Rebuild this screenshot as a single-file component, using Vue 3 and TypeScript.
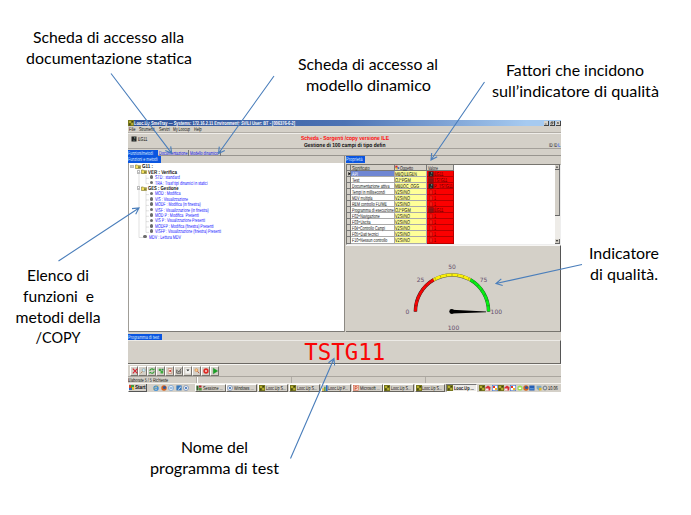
<script setup lang="ts">
import { h } from 'vue'

interface Label { t: string; x: number; y: number; w: number }
interface Node { t: string; w: number; level: number; kind: 'folder' | 'leaf' }
interface Row { name: string; w: number; obj: string; val: string; icon: string }

// Single line of interface text set to a fixed width.
const Fit = (props: { t: string; w: number }) =>
  h('svg', { class: 'fit', width: props.w, height: 6 }, [
    h('text', { x: 0, y: 4.8, textLength: props.w, lengthAdjust: 'spacingAndGlyphs' }, props.t),
  ])
Fit.props = ['t', 'w']

const labels: Label[] = [
  { t: 'Scheda di accesso alla', x: 33, y: 43, w: 151 },
  { t: 'documentazione statica', x: 26, y: 64, w: 166 },
  { t: 'Scheda di accesso al', x: 298, y: 70, w: 140 },
  { t: 'modello dinamico', x: 306, y: 91, w: 125 },
  { t: 'Fattori che incidono', x: 506, y: 76, w: 138 },
  { t: 'sull’indicatore di qualità', x: 492, y: 97, w: 167 },
  { t: 'Elenco di', x: 27, y: 281, w: 62 },
  { t: 'funzioni\u00a0 e', x: 23, y: 302, w: 71 },
  { t: 'metodi della', x: 15.5, y: 323, w: 85 },
  { t: '/COPY', x: 35.5, y: 343, w: 45 },
  { t: 'Indicatore', x: 589, y: 259, w: 70 },
  { t: 'di qualità.', x: 590, y: 280, w: 68 },
  { t: 'Nome del', x: 181, y: 453, w: 67 },
  { t: 'programma di test', x: 150, y: 474, w: 129 },
]

const arrows = [
  [111, 73.5, 171.7, 153.3],
  [274, 76, 218.5, 153.5],
  [484.5, 82, 431, 160],
  [58.5, 261, 139, 208],
  [582, 264.5, 496, 283.5],
  [290.5, 458.5, 334, 358.5],
]

function arrowPath([x1, y1, x2, y2]: number[]): string {
  const a = Math.atan2(y2 - y1, x2 - x1)
  const p = (d: number) => `${(x2 - 7 * Math.cos(a + d)).toFixed(1)} ${(y2 - 7 * Math.sin(a + d)).toFixed(1)}`
  return `M${x1} ${y1}L${x2} ${y2}M${p(0.5)}L${x2} ${y2}L${p(-0.5)}`
}

const menus = [
  { t: 'File', w: 6.5 },
  { t: 'Strumenti', w: 15.5 },
  { t: 'Servizi', w: 10.7 },
  { t: 'My Loocup', w: 17 },
  { t: 'Help', w: 7.7 },
]

const tree: Node[] = [
  { t: 'G11 :', w: 11, level: 0, kind: 'folder' },
  { t: 'VER : Verifica', w: 29, level: 1, kind: 'folder' },
  { t: 'STD : standard', w: 24.7, level: 2, kind: 'leaf' },
  { t: 'TRA : Trasf tipi dinamici in statici', w: 52.5, level: 2, kind: 'leaf' },
  { t: 'GES : Gestione', w: 30.5, level: 1, kind: 'folder' },
  { t: 'MOD : Modifica', w: 25.5, level: 2, kind: 'leaf' },
  { t: 'VIS : Visualizzazione', w: 33, level: 2, kind: 'leaf' },
  { t: 'MODF : Modifica (in finestra)', w: 45.7, level: 2, kind: 'leaf' },
  { t: 'VISF : Visualizzazione (in finestra)', w: 53.7, level: 2, kind: 'leaf' },
  { t: 'MOD P : Modifica  Presenti', w: 43.7, level: 2, kind: 'leaf' },
  { t: 'VIS P : Visualizzazione Presenti', w: 50, level: 2, kind: 'leaf' },
  { t: 'MODFP : Modifica (finestra) Presenti', w: 58.5, level: 2, kind: 'leaf' },
  { t: 'VISFP : Visualizzazione (finestra) Presenti', w: 66, level: 2, kind: 'leaf' },
  { t: 'MDV : Lettura MDV', w: 32, level: 1, kind: 'leaf' },
]

const objW: Record<string, number> = { MBQILEGEN: 22, 'OJ*PGM': 15.7, MBDOC_OGG: 24, 'V2SI/NO': 15 }
const valW: Record<string, number> = { ËG11: 9.3, TSTG11: 13.3, P_TSTG11: 18.7, '1': 1.8 }

const rows: Row[] = [
  { name: 'API', w: 6, obj: 'MBQILEGEN', val: 'ËG11', icon: 'dark' },
  { name: 'Test', w: 7.5, obj: 'OJ*PGM', val: 'TSTG11', icon: 'brown' },
  { name: 'Documentazione attiva', w: 37.5, obj: 'MBDOC_OGG', val: 'P_TSTG11', icon: 'dark' },
  { name: 'Tempi in millisecondi', w: 33, obj: 'V2SI/NO', val: '1', icon: 'page' },
  { name: 'MDV multipla', w: 20.5, obj: 'V2SI/NO', val: '1', icon: 'page' },
  { name: 'REM controllo FU/ME', w: 35, obj: 'V2SI/NO', val: '1', icon: 'page' },
  { name: 'Programma di esecuzione', w: 41.7, obj: 'OJ*PGM', val: 'ËG11', icon: 'brown' },
  { name: 'F02=Navigazione', w: 27.7, obj: 'V2SI/NO', val: '1', icon: 'page' },
  { name: 'F03=Uscita', w: 18.5, obj: 'V2SI/NO', val: '1', icon: 'page' },
  { name: 'F04=Controllo Campi', w: 33, obj: 'V2SI/NO', val: '1', icon: 'page' },
  { name: 'F05=Dati tecnici', w: 26.5, obj: 'V2SI/NO', val: '1', icon: 'page' },
  { name: 'F10=Nessun controllo', w: 35.3, obj: 'V2SI/NO', val: '1', icon: 'page' },
]

const tools = ['x', 'zoom', 'sync', 'exit', 'note', 'check', 'drop', 'find', 'stop', 'play']
const quick = ['ie', 'fox', 'mail', 'desk', 'chrome']
const tasks = [
  { t: 'Sessione ...', i: 'sess' },
  { t: 'Windows ...', i: 'chrome' },
  { t: 'Looc.Up S...', i: 'looc' },
  { t: 'Looc.Up S...', i: 'looc' },
  { t: 'Looc.Up P...', i: 'chart' },
  { t: 'Microsoft ...', i: 'ppt' },
  { t: 'Looc.Up S...', i: 'looc' },
  { t: 'Looc.Up S...', i: 'looc' },
  { t: 'Looc.Up ...', i: 'looc' },
]
const tray = ['looc', 'red', 'multi', 'looc', 'red', 'multi', 'green', 'fox', 'blue', 'shield', 'gear']

const ticks = Array.from({ length: 21 }, (_, i) => {
  const a = Math.PI * (1 - i / 20)
  const pt = (r: number) => `${(107 + r * Math.cos(a)).toFixed(2)} ${(65.5 - r * Math.sin(a)).toFixed(2)}`
  return `M${pt(35.6)}L${pt(37.6)}`
}).join('')
</script>

<template>
  <main class="page">
    <svg class="defs" width="0" height="0">
      <symbol id="looc" viewBox="0 0 6 6"><rect width="6" height="6" fill="#77771f" /><path d="M1 1h2v2H1zM3.2 3h2v2h-2z" fill="#b5ae30" /><path d="M1.2 3.6h1.2v1.8H1.2zM3.7 1h1.5v1.2H3.7z" fill="#40400f" /></symbol>
      <symbol id="ie" viewBox="0 0 6 6"><circle cx="3" cy="3.2" r="2.1" fill="none" stroke="#2b87d9" stroke-width="1.1" /><path d="M1 3.2h4" stroke="#2b87d9" /><path d="M.5 5C1 2 4 .3 5.8.9" fill="none" stroke="#dfb63b" stroke-width=".6" /></symbol>
      <symbol id="fox" viewBox="0 0 6 6"><circle cx="3" cy="3" r="2.7" fill="#d8621c" /><circle cx="3.5" cy="2.5" r="1.6" fill="#31569c" /></symbol>
      <symbol id="mail" viewBox="0 0 6 6"><circle cx="3" cy="3" r="2.6" fill="#e3effa" stroke="#5d91ca" stroke-width=".6" /><path d="M1.6 3h3" stroke="#3676be" stroke-width=".8" /></symbol>
      <symbol id="desk" viewBox="0 0 6 6"><rect x=".4" y=".4" width="5.2" height="5" fill="#3678bd" /><path d="M2 4.5l2.5-3 .5.6-2.4 2.7z" fill="#fff" /></symbol>
      <symbol id="chrome" viewBox="0 0 6 6"><circle cx="3" cy="3" r="2.5" fill="#f0f2f5" stroke="#6984ad" stroke-width=".7" /><circle cx="3" cy="3" r="1.1" fill="#356eb9" /></symbol>
      <symbol id="sess" viewBox="0 0 6 6"><path d="M.5.8h2v4.6h-2z" fill="#2f622b" /><path d="M3 .5h2.5v2H3z" fill="#b2272c" /><path d="M3 3h2.7v2.5H3z" fill="#4c9137" /></symbol>
      <symbol id="chart" viewBox="0 0 6 6"><path d="M.4 3.2h1.4V6H.4z" fill="#e9b527" /><path d="M2.2 1.8h1.4V6H2.2z" fill="#4a9342" /><path d="M4 .3h1.6V6H4z" fill="#276ac6" /></symbol>
      <symbol id="ppt" viewBox="0 0 6 6"><rect x=".3" y=".3" width="5.4" height="5.4" fill="#f1d3c8" stroke="#d4583b" stroke-width=".5" /><path d="M2 5V1.5h1.2a1 1 0 010 2H2" fill="none" stroke="#d5512e" stroke-width=".8" /></symbol>
      <symbol id="red" viewBox="0 0 6 6"><path d="M.4 2.5L3 .4l2.5 1.8-.5 3.2H1z" fill="#d92e35" /><path d="M1 3.5h2.5v2H1z" fill="#eee" /></symbol>
      <symbol id="multi" viewBox="0 0 6 6"><rect x=".3" y=".3" width="5.4" height="5.4" fill="#fff" stroke="#4175d3" stroke-width=".6" /><path d="M1 1h2v2H1z" fill="#e23828" /><path d="M3 3h2.2v2.2H3z" fill="#f4b52c" /></symbol>
      <symbol id="green" viewBox="0 0 6 6"><circle cx="3" cy="3" r="2.6" fill="#9ddf52" /><path d="M1.7 2.5h2.5v1.6H1.7z" fill="#fff" /></symbol>
      <symbol id="blue" viewBox="0 0 6 6"><rect x=".3" y=".5" width="5.2" height="5" fill="#245fb5" /><path d="M1 3.8h3.8" stroke="#82b9ed" stroke-width=".8" /></symbol>
      <symbol id="shield" viewBox="0 0 6 6"><path d="M.6.7h4.8v2.8L3 5.7.6 3.5z" fill="#7ca8c0" /><path d="M3 2.8h2.5v2.6H3z" fill="#e6b922" /></symbol>
      <symbol id="gear" viewBox="0 0 6 6"><circle cx="3" cy="3" r="1.9" fill="#cad1d8" stroke="#6b7886" stroke-width="1" /></symbol>
      <symbol id="x" viewBox="0 0 9 9"><path d="M2 1.8l5.2 5.4M7.2 1.8L2 7.2" stroke="#d6202f" stroke-width="1.2" /></symbol>
      <symbol id="zoom" viewBox="0 0 9 9"><circle cx="5.3" cy="3.5" r="1.7" fill="#cdeef6" stroke="#8095a0" stroke-width=".6" /><path d="M4 4.9L1.8 7.2" stroke="#b78655" stroke-width="1" /></symbol>
      <symbol id="sync" viewBox="0 0 9 9"><path d="M2 4.3A2.4 2.4 0 016.2 3M7 4.8a2.4 2.4 0 01-4.2 1.4" fill="none" stroke="#2e9e32" stroke-width="1.2" /><path d="M5 3.6h2.3V1.4zM4 5.7H1.6v2.2z" fill="#2e9e32" /></symbol>
      <symbol id="exit" viewBox="0 0 9 9"><path d="M2 2h3v2.5H2zM4 4.5h3v2.7H4z" fill="#3caa3c" /><path d="M5.5 2h1.8v2H5.5z" fill="#258245" /></symbol>
      <symbol id="note" viewBox="0 0 9 9"><path d="M2.5 1.7h4v5.5h-4z" fill="#f7f0e8" stroke="#b66b50" stroke-width=".6" /><path d="M3.7 3.3h2v2.2h-2z" fill="#d13b34" /></symbol>
      <symbol id="check" viewBox="0 0 9 9"><path d="M2 3v4h4.5V4M3 4l1.3 1.8L7 1.6" fill="none" stroke="#444" stroke-width=".9" /></symbol>
      <symbol id="drop" viewBox="0 0 9 9"><path d="M1.5 1.4h6v6h-6z" fill="#f3f3f0" /><path d="M2.6 2.8h3.6L4.4 4.8z" fill="#222" /></symbol>
      <symbol id="find" viewBox="0 0 9 9"><circle cx="3.8" cy="3.5" r="1.6" fill="#f8cf91" stroke="#dc8540" stroke-width=".7" /><path d="M5 4.8L7 7" stroke="#b04f32" stroke-width="1" /></symbol>
      <symbol id="stop" viewBox="0 0 9 9"><circle cx="4.5" cy="4.5" r="3" fill="#de2b24" /><path d="M3.6 3.6h1.8v1.8H3.6z" fill="#fff" /></symbol>
      <symbol id="play" viewBox="0 0 9 9"><path d="M2.6 1.3v6.4l5-3.2z" fill="#18a324" stroke="#0b7916" stroke-width=".4" /></symbol>
      <symbol id="folder" viewBox="0 0 6 5"><path d="M.4 1h2l.6.7h2.6v2.8H.4z" fill="#f3de5b" stroke="#77702d" stroke-width=".6" /><path d="M3 2.6h2v1.2H3z" fill="#5f6424" /></symbol>
      <symbol id="dark" viewBox="0 0 6 6"><path d="M.5.5h5v5h-5z" fill="#222" /><path d="M3 1.2h1.3v1.3H3zM2.5 3.8h1v1h-1z" fill="#779a91" /></symbol>
      <symbol id="brown" viewBox="0 0 6 6"><rect x=".8" y=".8" width="4.4" height="4.4" fill="#9d1515" stroke="#651111" stroke-width=".6" /><path d="M1 2.6h4M1 4h4" stroke="#6b1414" stroke-width=".5" /></symbol>
      <symbol id="page" viewBox="0 0 6 6"><path d="M1.5.8h2l1 1v3.5h-3z" fill="#f01b13" stroke="#a50808" stroke-width=".5" /></symbol>
      <symbol id="shapes" viewBox="0 0 6 6"><path d="M.4.8h2.6v2.6H.4z" fill="#d32a2a" /><path d="M3 2l2.7 1.6L3 5.3z" fill="#2753bd" /><circle cx="1.9" cy="4.3" r="1.2" fill="#edc62e" /></symbol>
      <symbol id="min" viewBox="0 0 5 5"><path d="M1 3.8h2.2" stroke="#111" stroke-width=".7" /></symbol>
      <symbol id="restore" viewBox="0 0 5 5"><path d="M1.8 2V.9h2.1v2H3M1 2h2v2H1z" fill="none" stroke="#111" stroke-width=".55" /></symbol>
      <symbol id="close" viewBox="0 0 5 5"><path d="M1.1 1l2.6 2.8M3.7 1L1.1 3.8" stroke="#111" stroke-width=".6" /></symbol>
      <symbol id="up" viewBox="0 0 5 5"><path d="M2.5 1.5L4 3.2H1z" /></symbol>
      <symbol id="down" viewBox="0 0 5 5"><path d="M2.5 3.4L4 1.7H1z" /></symbol>
      <symbol id="cur" viewBox="0 0 5 5"><path d="M1.4 1L3.6 2.7 1.4 4.4z" /></symbol>
    </svg>

    <section class="window">
      <header class="title">
        <svg class="i6"><use href="#looc" /></svg>
        <span class="title-text"><Fit t="Looc.Up SmeTray --- Systems: 172.16.2.11 Environment: SVILI User: BT - [006376-6-2]" :w="161" /></span>
        <svg class="wb"><use href="#min" /></svg><svg class="wb"><use href="#restore" /></svg><svg class="wb close"><use href="#close" /></svg>
      </header>
      <nav class="menu"><Fit v-for="m in menus" :key="m.t" :t="m.t" :w="m.w" /></nav>
      <div class="head">
        <div class="head-left"><svg class="i6"><use href="#dark" /></svg><Fit t="EG11" :w="9.3" /></div>
        <div class="head-mid"><Fit class="red" t="Scheda - Sorgenti /copy versione ILE" :w="88" /><Fit t="Gestione di 100 campi di tipo defin" :w="81.5" /></div>
        <div class="head-right"><Fit t="ID ID" :w="8.3" /><Fit class="lk" t="L" :w="2.5" /></div>
      </div>
      <div class="tabs">
        <span class="tab on"><Fit t="Funzioni/metodi" :w="25" /></span><span class="tab doc"><Fit t="Documentazione" :w="28.5" /></span><span class="tab dyn"><Fit t="Modello dinamico" :w="28" /></span>
      </div>
      <div class="body">
        <div class="left">
          <div class="cap"><span class="tab on fm"><Fit t="Funzioni e metodi" :w="29.5" /></span></div>
          <div class="tree">
            <svg class="wires"><path d="M3.5 4V5M10 6.5V74.5H14.5M10 9.9H14M17 12V20.7H20M17 15.3H20M17 28V69.4H20M17 31.6H20M17 37H20M17 42.4H20M17 47.8H20M17 53.3H20M17 58.7H20M17 64.1H20" /></svg>
            <div v-for="n in tree" :key="n.t" class="node" :class="['l' + n.level, n.kind]">
              <span v-if="n.kind === 'folder'" class="box" />
              <svg v-if="n.kind === 'folder'" class="fold"><use href="#folder" /></svg>
              <span v-else class="dot" />
              <Fit :t="n.t" :w="n.w" />
            </div>
          </div>
        </div>
        <div class="right">
          <div class="cap"><span class="tab on pr"><Fit t="Proprietà" :w="16.5" /></span></div>
          <div class="grid-box">
            <div class="grid">
              <div class="gr gh"><span class="c0" /><span class="c1"><Fit t="Significato" :w="17.5" /></span><span class="c2"><svg class="i5"><use href="#shapes" /></svg><Fit t="Oggetto" :w="13" /></span><span class="c3"><Fit t="Valore" :w="10" /></span></div>
              <div v-for="(r, i) in rows" :key="r.name" class="gr" :class="{ sel: i === 0 }">
                <span class="c0"><svg v-if="i === 0" class="i5"><use href="#cur" /></svg></span><span class="c1"><Fit :t="r.name" :w="r.w" /></span><span class="c2"><Fit :t="r.obj" :w="objW[r.obj]" /></span>
                <span class="c3"><svg class="i6"><use :href="'#' + r.icon" /></svg><Fit :t="r.val" :w="valW[r.val]" /></span>
              </div>
            </div>
            <div class="scroll"><svg class="sb"><use href="#up" /></svg><span class="thumb" /><span class="track" /><svg class="sb"><use href="#down" /></svg></div>
          </div>
          <div class="gauge">
            <svg width="214" height="85" viewBox="0 0 214 85">
              <g fill="none" stroke-width="2.8">
                <path d="M70.4 65.5A36.6 36.6 0 0188.7 33.8" stroke="#222" stroke-width="3.5" />
                <path d="M88.7 33.8A36.6 36.6 0 01125.3 33.8" stroke="#555" stroke-width="3.5" />
                <path d="M125.3 33.8A36.6 36.6 0 01143.6 65.5" stroke="#264b26" stroke-width="3.5" />
                <path d="M70.4 65.5A36.6 36.6 0 0188.7 33.8" stroke="#f50505" />
                <path d="M88.7 33.8A36.6 36.6 0 01125.3 33.8" stroke="#fcf20a" />
                <path d="M125.3 33.8A36.6 36.6 0 01143.6 65.5" stroke="#06ed13" />
                <path :d="ticks" stroke="#222" stroke-width=".35" />
              </g>
              <path d="M107 63.7L141 65.4v.8L107 67.4z" /><circle cx="106.7" cy="65.5" r="2.4" />
              <g class="num">
                <text x="62.5" y="67.7">0</text><text x="75.5" y="36">25</text><text x="107" y="23">50</text>
                <text x="138.5" y="36">75</text><text x="151.3" y="67.7">100</text><text x="108.5" y="84.3">100</text>
              </g>
            </svg>
          </div>
        </div>
      </div>
      <div class="cap test-cap"><span class="tab on pt"><Fit t="Programma di test" :w="31" /></span></div>
      <div class="test">TSTG11</div>
      <div class="tools"><span v-for="t in tools" :key="t" class="tool"><svg><use :href="'#' + t" /></svg></span></div>
      <div class="status"><span class="s1"><Fit t="Elaborate 5 / 5 Richieste" :w="40" /></span><span class="s2" /><span class="s3" /></div>
      <footer class="bar">
        <span class="start"><i class="flag" /><Fit t="Start" :w="10.5" /></span>
        <span class="quick"><svg v-for="q in quick" :key="q" class="i6"><use :href="'#' + q" /></svg></span>
        <span class="tasks">
          <span v-for="(t, i) in tasks" :key="i" class="task" :class="{ act: i === 8 }"><svg class="i6"><use :href="'#' + t.i" /></svg><Fit :t="t.t" :w="19.8" /></span>
        </span>
        <span class="tray"><svg v-for="(t, i) in tray" :key="i" class="i6"><use :href="'#' + t" /></svg></span>
        <Fit t="10.06" :w="9.8" />
      </footer>
    </section>

    <svg class="notes" width="691" height="515" viewBox="0 0 691 515">
      <path v-for="(a, i) in arrows" :key="i" :d="arrowPath(a)" />
      <text v-for="l in labels" :key="l.t" :x="l.x" :y="l.y" :textLength="l.w" lengthAdjust="spacingAndGlyphs">{{ l.t }}</text>
    </svg>
  </main>
</template>

<style>
body { background: #fff; }
.fit { display: block; flex: none; overflow: visible; }
.fit text { fill: currentColor; text-rendering: geometricPrecision; white-space: pre; }
</style>

<style scoped>
* { box-sizing: border-box; }
.page { position: relative; width: 691px; height: 515px; overflow: hidden; padding: 120px 0 0 127.5px; background: #fff; }
.defs { position: absolute; }
.notes { position: absolute; left: 0; top: 0; }
.notes path { fill: none; stroke: #4a7ebb; stroke-width: 1.1; }
.notes text { font: 16px Lato, "Open Sans", sans-serif; fill: #000; }

.window { width: 433.5px; height: 272px; background: #d4d0c8; font: 5.6px/5.6px "Liberation Sans", Arial, sans-serif; color: #111; display: flex; flex-direction: column; overflow: hidden; }
.i6 { width: 6px; height: 6px; flex: none; }
.i5 { width: 5px; height: 5px; flex: none; }
.title { height: 6px; flex: none; display: flex; align-items: center; gap: .7px; background: linear-gradient(90deg, #2c5097, #4d73b4 50%, #a6caf0 92%); color: #fff; font-weight: bold; }
.title-text { flex: 1; }
.wb { width: 5px; height: 5px; background: #d8d4cc; border-right: .5px solid #444; border-bottom: .5px solid #444; }
.close { margin-left: .4px; }
.menu { height: 7px; flex: none; padding-left: 1.3px; display: flex; gap: 3.9px; align-items: center; border-bottom: 1px solid #b2aea7; }
.head { height: 16px; flex: none; display: flex; border-bottom: 1px solid #a4a09a; border-top: 1px solid #efede9; }
.head-left { width: 130px; padding: 1.5px 0 0 3px; display: flex; gap: 1px; }
.head-mid { width: 173px; padding: 1.2px 0 0 1px; display: flex; flex-direction: column; align-items: center; gap: .8px; font-size: 5.9px; font-weight: bold; }
.red { color: #f11; }
.head-right { flex: 1; padding: 8px 1px 0 0; display: flex; justify-content: flex-end; gap: .5px; }
.lk { color: #2b6bea; font-weight: bold; }
.tabs { height: 7px; flex: none; display: flex; padding-top: 1px; border-bottom: 1px solid #98958f; color: #0f14e8; }
.tab { height: 5.6px; padding: 0 .7px; border-right: .7px solid #777; }
.on { background: #0a55e0; color: #dfeaff; border-right: 0; width: 30px; }
.tabs .doc { width: 31.5px; padding-left: 1.3px; }
.tabs .dyn { width: 32px; padding-left: 1.3px; }
.body { height: 176px; flex: none; display: flex; }
.left { width: 217px; height: 176px; border-right: 1px solid #8c8983; }
.cap { height: 6.5px; display: flex; }
.cap .tab { height: 6.5px; }
.cap .fm { width: 33.5px; }
.cap .pr { width: 19.5px; }
.cap .pt { width: 34.5px; }
.tree { position: relative; height: 169px; background: #fff; border-bottom: 1px solid #7d7b77; border-left: 1px solid #a09d97; padding-top: 1.2px; }
.wires { position: absolute; left: 0; top: 0; width: 30px; height: 90px; }
.wires path { fill: none; stroke: #aaa; stroke-width: .35; }
.node { position: relative; height: 5.42px; display: flex; align-items: center; gap: 1px; }
.leaf { color: #1616ff; }
.folder { font-weight: bold; color: #111; }
.l0 { padding-left: 1.8px; }
.l1 { padding-left: 8.2px; }
.l2 { padding-left: 21px; }
.l1.leaf { padding-left: 14.5px; }
.box { width: 3.6px; height: 3.6px; border: .5px solid #bbb; background: linear-gradient(#666, #666) center / 2px .4px no-repeat #fff; }
.fold { width: 6px; height: 5px; }
.dot { width: 3.6px; height: 3.6px; margin-right: 1px; border-radius: 50%; background: #6b6b6b; }
.right { flex: 1; padding-left: 1px; }
.grid-box { height: 81px; margin-top: 1px; display: flex; background: #fff; border: 1px solid #77756f; border-right-color: #eee; border-bottom-color: #eee; }
.grid { flex: 1; }
.gr { height: 6.08px; display: flex; }
.gr span { flex: none; border-right: .6px solid #aaa; border-bottom: .6px solid #aaa; padding-left: .6px; }
.gr .c0 { width: 4.7px; background: #d4d0c8; border-color: #777; padding: 0; }
.gr .c1 { width: 43.5px; }
.gr .c2 { width: 32.5px; background: #ffff98; display: flex; }
.gr .c3 { width: 26.5px; background: #fb0000; border-color: #b80000; color: #580000; display: flex; }
.gr.gh span { background: #d4d0c8; color: #222; border-color: #777; }
.gr.sel .c1 { background: #6f86d3; color: #fff; }
.scroll { width: 5px; display: flex; flex-direction: column; background: #eeece8; }
.sb { width: 5px; height: 5px; flex: none; background: #d4d0c8; border-right: .5px solid #666; border-bottom: .5px solid #666; }
.thumb { height: 46px; background: #d4d0c8; border-right: 1px solid #777; border-bottom: 1px solid #666; }
.track { flex: 1; }
.gauge { height: 87.5px; border-top: 1px solid #f7f6f4; border-right: 1px solid #555; border-bottom: 1px solid #77756f; }
.gauge svg { display: block; margin-left: -.6px; }
.num text { font: 6px "DejaVu Sans", sans-serif; fill: #634e6b; text-anchor: middle; }
.test-cap { height: 8px; flex: none; padding-top: 1.5px; }
.test { height: 24px; flex: none; display: flex; justify-content: center; align-items: center; padding-left: 2px; border-top: 1px solid #eceae6; border-right: 1px solid #555; border-bottom: 1.3px solid #6c6964; font: 22.4px/22px "DejaVu Sans Mono", monospace; color: #fa0505; }
.tools { height: 12.5px; flex: none; padding: 1px 0 0 2px; display: flex; border-top: 1px solid #f5f4f1; border-bottom: 1px solid #aaa69f; }
.tool { width: 8.95px; height: 9.6px; border-left: .7px solid #fff; border-top: .7px solid #fff; border-right: .8px solid #77746e; border-bottom: .8px solid #77746e; display: flex; }
.tool svg { width: 8px; height: 8px; flex: none; }
.status { height: 6px; flex: none; display: flex; }
.s1 { width: 69px; border-right: 1px solid #b0aca5; }
.s2 { width: 95px; border-left: .5px solid #fff; border-right: 1px solid #b0aca5; }
.s3 { width: 134px; border-right: 1px solid #b0aca5; }
.bar { flex: 1; display: flex; align-items: center; border-top: 1px solid #f5f3ef; }
.start { width: 19px; height: 7.6px; border-right: .8px solid #555; border-bottom: .8px solid #555; border-left: .7px solid #fff; font-weight: bold; display: flex; align-items: center; gap: 1px; }
.flag { width: 5px; height: 4.6px; background: conic-gradient(#3ea03e 25%, #e8bb28 0 50%, #2c66c9 0 75%, #d84629 0); }
.quick { width: 48.5px; padding-left: 6.5px; display: flex; gap: 1.6px; }
.tasks { display: flex; gap: .7px; width: 284px; }
.task { width: 30.7px; height: 7.8px; border-left: .7px solid #fff; border-top: .7px solid #fff; border-right: .8px solid #68655f; border-bottom: .8px solid #68655f; display: flex; align-items: center; gap: .8px; }
.act { background: #eceae6; font-weight: bold; border-color: #777 #fff #fff #777; }
.tray { width: 69px; display: flex; gap: .3px; }
</style>
